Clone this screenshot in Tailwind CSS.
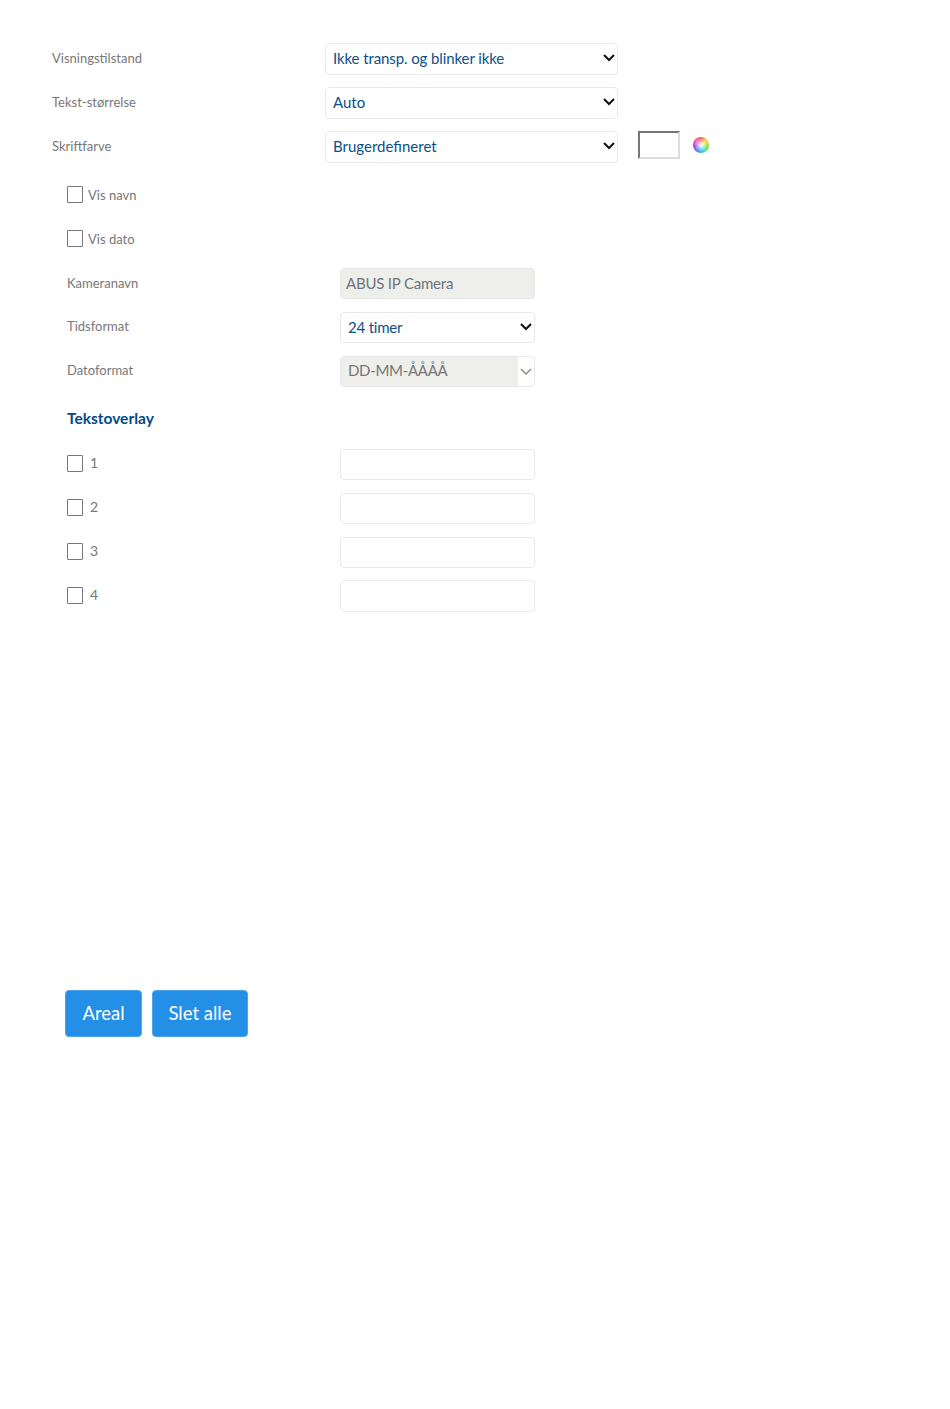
<!DOCTYPE html>
<html lang="da">
<head>
    <meta charset="UTF-8">
    <meta name="viewport" content="width=device-width, initial-scale=1.0">
    <title>Tekstoverlay</title>
    <script src="https://cdn.jsdelivr.net/npm/@tailwindcss/browser@4"></script>
</head>
<body class="bg-white font-['Lato',sans-serif] min-h-[1409px]">
  <div class="pt-[43px] pl-[52px] flex flex-col gap-3">
    <div class="flex items-center h-8">
      <label class="w-[273px] text-[13px] text-[#777]">Visningstilstand</label>
      <div class="relative w-[293px] h-8">
        <select class="appearance-none w-full h-8 pl-[7px] pb-[2px] border border-[#e6e9ec] rounded bg-white text-[15px] tracking-[-0.1px] text-[#0b4f8a]"><option>Ikke transp. og blinker ikke</option></select>
        <svg class="absolute right-[3px] top-[11px] pointer-events-none" width="12" height="8" viewBox="0 0 12 8" fill="none" stroke="#111" stroke-width="2"><path d="M1 1l5 5 5-5"/></svg>
      </div>
    </div>
    <div class="flex items-center h-8">
      <label class="w-[273px] text-[13px] text-[#777]">Tekst-størrelse</label>
      <div class="relative w-[293px] h-8">
        <select class="appearance-none w-full h-8 pl-[7px] pb-[2px] border border-[#e6e9ec] rounded bg-white text-[15px] text-[#0b4f8a]"><option>Auto</option></select>
        <svg class="absolute right-[3px] top-[11px] pointer-events-none" width="12" height="8" viewBox="0 0 12 8" fill="none" stroke="#111" stroke-width="2"><path d="M1 1l5 5 5-5"/></svg>
      </div>
    </div>
    <div class="flex items-center h-8">
      <label class="w-[273px] text-[13px] text-[#777]">Skriftfarve</label>
      <div class="relative w-[293px] h-8">
        <select class="appearance-none w-full h-8 pl-[7px] pb-[2px] border border-[#e6e9ec] rounded bg-white text-[15px] text-[#0b4f8a]"><option>Brugerdefineret</option></select>
        <svg class="absolute right-[3px] top-[11px] pointer-events-none" width="12" height="8" viewBox="0 0 12 8" fill="none" stroke="#111" stroke-width="2"><path d="M1 1l5 5 5-5"/></svg>
      </div>
      <div class="ml-5 -mt-1 w-[42px] h-7 border-2 border-t-[#767676] border-l-[#767676] border-r-[#ddd] border-b-[#ddd]"></div>
      <div class="ml-[13px] -mt-1 w-4 h-4 rounded-full bg-[radial-gradient(circle,#ffffff_0%,#ffffff00_65%),conic-gradient(#ff5a4a,#ffd83a,#6fe03a,#2fdcc0,#3a8cf0,#a03ae0,#ff4ab0,#ff5a4a)]"></div>
    </div>
  </div>

  <div class="pt-[17px] pl-[67px] flex flex-col gap-[13px]">
    <div class="flex items-center h-[31px]">
      <input type="checkbox" class="appearance-none w-[16px] h-[17px] -mt-[2px] border border-[#767676] rounded-[1px] mr-[5px]">
      <span class="text-[13px] text-[#777]">Vis navn</span>
    </div>
    <div class="flex items-center h-[31px]">
      <input type="checkbox" class="appearance-none w-[16px] h-[17px] -mt-[2px] border border-[#767676] rounded-[1px] mr-[5px]">
      <span class="text-[13px] text-[#777]">Vis dato</span>
    </div>
    <div class="flex items-center h-[31px]">
      <label class="w-[273px] text-[13px] text-[#777]">Kameranavn</label>
      <input type="text" disabled value="ABUS IP Camera" class="w-[195px] h-[31px] pl-[5px] pr-[6px] pb-[1px] border border-[#e6e9ec] rounded bg-[#eeeeea] text-[15px] tracking-[-0.2px] text-[#6f7480]">
    </div>
    <div class="flex items-center h-[31px]">
      <label class="w-[273px] pb-[1px] text-[13px] text-[#777]">Tidsformat</label>
      <div class="relative w-[195px] h-[31px]">
        <select class="appearance-none w-full h-[31px] pl-[7px] border border-[#e6e9ec] rounded bg-white text-[15px] tracking-[-0.2px] text-[#0b4f8a]"><option>24 timer</option></select>
        <svg class="absolute right-[3px] top-[11px] pointer-events-none" width="12" height="8" viewBox="0 0 12 8" fill="none" stroke="#111" stroke-width="2"><path d="M1 1l5 5 5-5"/></svg>
      </div>
    </div>
    <div class="flex items-center h-[31px]">
      <label class="w-[273px] pb-[1px] text-[13px] text-[#777]">Datoformat</label>
      <div class="w-[195px] h-[31px] flex items-center border border-[#e6e9ec] rounded bg-[#eeeeea] overflow-hidden">
        <span class="flex-1 pl-[7px] pb-[2px] text-[15px] tracking-[-0.3px] text-[#777]">DD-MM-ÅÅÅÅ</span>
        <div class="w-[16px] h-full bg-white flex items-center justify-center">
          <svg width="12" height="8" viewBox="0 0 12 8" fill="none" stroke="#8a8a8a" stroke-width="1.5"><path d="M1 1l5 5 5-5"/></svg>
        </div>
      </div>
    </div>
    <div class="flex items-center h-[31px] pt-[6px] text-[15.5px] font-bold text-[#004b87]">Tekstoverlay</div>
  </div>

  <div class="pt-[18px] pl-[67px] flex flex-col gap-[13px]">
    <div class="flex items-center h-[31px]">
      <input type="checkbox" class="appearance-none w-[16px] h-[17px] -mt-[3px] border border-[#767676] rounded-[1px] mr-[7px]">
      <span class="w-[250px] pb-[4px] text-sm text-[#777]">1</span>
      <input type="text" class="w-[195px] h-[31px] border border-[#e6e9ec] rounded bg-white">
    </div>
    <div class="flex items-center h-[31px]">
      <input type="checkbox" class="appearance-none w-[16px] h-[17px] -mt-[3px] border border-[#767676] rounded-[1px] mr-[7px]">
      <span class="w-[250px] pb-[4px] text-sm text-[#777]">2</span>
      <input type="text" class="w-[195px] h-[31px] border border-[#e6e9ec] rounded bg-white">
    </div>
    <div class="flex items-center h-[31px]">
      <input type="checkbox" class="appearance-none w-[16px] h-[17px] -mt-[3px] border border-[#767676] rounded-[1px] mr-[7px]">
      <span class="w-[250px] pb-[4px] text-sm text-[#777]">3</span>
      <input type="text" class="w-[195px] h-[31px] border border-[#e6e9ec] rounded bg-white">
    </div>
    <div class="flex items-center h-[32px] -mt-px">
      <input type="checkbox" class="appearance-none w-[16px] h-[17px] -mt-[2px] border border-[#767676] rounded-[1px] mr-[7px]">
      <span class="w-[250px] pb-[3px] text-sm text-[#777]">4</span>
      <input type="text" class="w-[195px] h-[32px] border border-[#e6e9ec] rounded bg-white">
    </div>
  </div>

  <div class="mt-[378px] pl-[65px] flex gap-[10px]">
    <button class="w-[77px] h-[47px] border border-[#4da3ec] rounded bg-[#238fe7] text-white text-[18.5px]">Areal</button>
    <button class="w-[96px] h-[47px] border border-[#4da3ec] rounded bg-[#238fe7] text-white text-[18.5px]">Slet alle</button>
  </div>
</body>
</html>
